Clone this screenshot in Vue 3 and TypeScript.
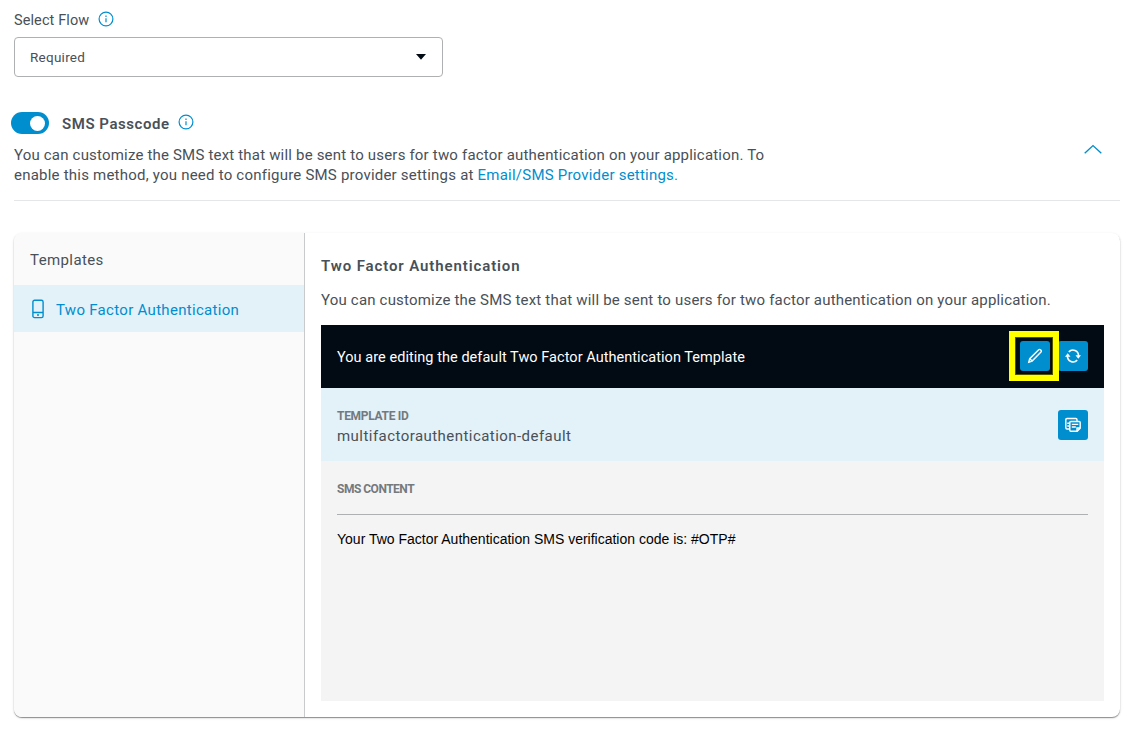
<script setup lang="ts">
import { ref } from 'vue'

interface Template {
  id: string
  name: string
  body: string
}

const flow = ref('Required')
const smsEnabled = ref(true)
const expanded = ref(true)
const template: Template = {
  id: 'multifactorauthentication-default',
  name: 'Two Factor Authentication',
  body: 'Your Two Factor Authentication SMS verification code is: #OTP#',
}
</script>

<template>
  <main class="page">
    <div class="label-row">
      <span class="select-label">Select Flow</span>
      <svg class="info" viewBox="0 0 16 16"><circle cx="8" cy="8" r="6.9" /><path d="M8 7.2v4M8 4.6v1.4" /></svg>
    </div>
    <div class="select">
      <span class="select-value">{{ flow }}</span>
      <svg class="caret" viewBox="0 0 10 6"><path d="M0 0h10L5 5.8z" /></svg>
    </div>

    <section class="method">
      <div class="method-text">
        <div class="method-head">
          <button class="toggle" :class="{ on: smsEnabled }" aria-label="SMS Passcode" @click="smsEnabled = !smsEnabled"><i></i></button>
          <h2 class="method-title">SMS Passcode</h2>
          <svg class="info" viewBox="0 0 16 16"><circle cx="8" cy="8" r="6.9" /><path d="M8 7.2v4M8 4.6v1.4" /></svg>
        </div>
        <p class="method-desc">
          <span class="line-a">You can customize the SMS text that will be sent to users for two factor authentication on your application. To</span><br />
          <span class="line-b">enable this method, you need to configure SMS provider settings at <a>Email/SMS Provider settings.</a></span>
        </p>
      </div>
      <button class="collapse" aria-label="Collapse" @click="expanded = !expanded">
        <svg viewBox="0 0 18 10"><path d="M.7 9.200 9 1.600l8.300 7.600" /></svg>
      </button>
    </section>

    <section class="card">
      <aside class="side">
        <div class="side-title"><span>Templates</span></div>
        <div class="side-item">
          <svg class="phone" viewBox="0 0 12 20"><rect x=".9" y="1.200" width="10.200" height="17.400" rx="1.700" /><path d="M1 13.500h10M5 16h2" /></svg>
          <span class="side-name">{{ template.name }}</span>
        </div>
      </aside>
      <div class="content">
        <h3 class="content-title">{{ template.name }}</h3>
        <p class="content-desc">You can customize the SMS text that will be sent to users for two factor authentication on your application.</p>
        <div class="editor">
          <div class="bar">
            <span class="bar-text">You are editing the default Two Factor Authentication Template</span>
            <div class="actions">
              <div class="highlight">
                <button class="action" aria-label="Edit">
                  <svg viewBox="0 0 16 16"><path d="M1.800 14.200l.9-3.500L11.700 1.700a1.200 1.200 0 0 1 1.700 0l.6.600a1.200 1.200 0 0 1 0 1.700L5.100 13.100zM2.900 10.800l2.200 2.200" /></svg>
                </button>
              </div>
              <button class="action" aria-label="Reset">
                <svg viewBox="0 0 16 16"><path class="arc" d="M3.800 3.900A5.600 5.600 0 0 1 13.500 8M12.200 12.100A5.600 5.600 0 0 1 2.500 8" /><path class="solid" d="M10.500 7.200H16l-2.700 3.600zM0 8.800h5.500L2.700 5.200z" /></svg>
              </button>
            </div>
          </div>
          <div class="identity">
            <div class="identity-text">
              <div class="caption id-caption">TEMPLATE ID</div>
              <div class="identity-value">{{ template.id }}</div>
            </div>
            <button class="action" aria-label="Copy">
              <svg viewBox="0 0 16 16"><path d="M4.200 12H2a1.200 1.200 0 0 1-1.200-1.200V2.700A1.200 1.200 0 0 1 2 1.500h8.800A1.200 1.200 0 0 1 12 2.700v1M2.300 6.200h2M2.300 9h2M5.800 4.500h8.400a1 1 0 0 1 1 1v5.700l-3 3H5.800a1 1 0 0 1-1-1V5.500a1 1 0 0 1 1-1zM15 11h-3v3M6.800 7.400h6.500M6.800 10h4" /></svg>
            </button>
          </div>
          <div class="message">
            <div class="caption sms-caption">SMS CONTENT</div>
            <p class="message-body">{{ template.body }}</p>
          </div>
        </div>
      </div>
    </section>
  </main>
</template>

<style>
body {
  margin: 0;
  background: #fff;
}
</style>

<style scoped>
.page {
  box-sizing: border-box;
  height: 731px;
  padding: 9px 15px 14px 14px;
  overflow: hidden;
  color: #495057;
  font-family: Roboto, sans-serif;
  font-size: 15px;
}
button {
  padding: 0;
  border: 0;
}
svg {
  display: block;
  fill: none;
}
h2, h3, p {
  margin: 0;
}
span, h2, h3, p, div {
  white-space: nowrap;
}
.info {
  width: 16px;
  height: 16px;
  stroke: #008ecf;
  stroke-width: 1.2;
}
.label-row {
  display: flex;
  align-items: center;
  gap: 8.5px;
  height: 20px;
}
.select-label {
  width: 75px;
  padding-top: 2px;
  font-size: 14.5px;
  letter-spacing: 0.1px;
}
.select {
  display: flex;
  box-sizing: border-box;
  width: 429px;
  height: 40px;
  margin-top: 8px;
  padding: 0 16px 0 15px;
  align-items: center;
  justify-content: space-between;
  border: 1px solid #aeb0b2;
  border-radius: 4px;
}
.select-value {
  font-size: 13.5px;
  letter-spacing: 0.25px;
}
.caret {
  width: 10px;
  height: 6px;
  fill: #020a13;
}
.method {
  display: flex;
  box-sizing: border-box;
  height: 124px;
  padding-top: 34px;
  align-items: flex-start;
  justify-content: space-between;
  border-bottom: 1px solid #e5e6e7;
}
.method-head {
  display: flex;
  height: 24px;
  margin-left: -3px;
  align-items: center;
}
.toggle {
  display: flex;
  box-sizing: border-box;
  width: 38px;
  height: 22px;
  padding: 0 4px;
  align-items: center;
  border-radius: 11px;
  background: #aeb0b2;
}
.toggle.on {
  justify-content: flex-end;
  background: #008ecf;
}
.toggle i {
  width: 15px;
  height: 15px;
  border-radius: 50%;
  background: #fff;
}
.method-title {
  width: 107px;
  margin: 0 9px 0 13px;
  padding-top: 1px;
  font-size: 15px;
  font-weight: 600;
  letter-spacing: 0.55px;
}
.method-head .info {
  margin-top: -2px;
}
.method-desc {
  margin-top: 10px;
  line-height: 20px;
}
.line-a {
  letter-spacing: 0.187px;
}
.line-b {
  letter-spacing: 0.22px;
}
a {
  color: #008ecf;
}
.collapse {
  margin: 33px 18px 0 0;
  background: none;
}
.collapse svg {
  width: 18px;
  height: 10px;
  stroke: #008ecf;
  stroke-width: 1.4;
}
.card {
  display: flex;
  height: 484px;
  margin-top: 32px;
  overflow: hidden;
  border-radius: 8px;
  box-shadow: 0 1px 1px rgba(0, 0, 0, 0.4), 0 1px 3px rgba(0, 0, 0, 0.12);
}
.side {
  box-sizing: border-box;
  width: 291px;
  flex: none;
  border-right: 1px solid #c9cacb;
  background: #fafafa;
}
.side-title {
  display: flex;
  box-sizing: border-box;
  height: 52px;
  padding: 2px 0 0 16px;
  align-items: center;
  letter-spacing: 0.4px;
}
.side-item {
  display: flex;
  height: 47px;
  padding-left: 18px;
  align-items: center;
  gap: 12px;
  color: #008ecf;
  background: #e3f1f9;
}
.side-name {
  padding-top: 2px;
  letter-spacing: 0.3px;
}
.phone {
  width: 12px;
  height: 20px;
  stroke: #008ecf;
  stroke-width: 1.4;
}
.content {
  flex: 1;
  padding: 22px 16px 16px;
}
.content-title {
  height: 22px;
  font-size: 15px;
  font-weight: 600;
  line-height: 22px;
  letter-spacing: 0.89px;
}
.content-desc {
  margin-top: 12px;
  line-height: 22px;
  letter-spacing: 0.19px;
}
.editor {
  height: 376px;
  margin-top: 14px;
  background: #f4f4f4;
}
.bar {
  display: flex;
  height: 63px;
  padding: 0 16px;
  align-items: center;
  justify-content: space-between;
  color: #fff;
  background: #020a13;
}
.bar-text {
  padding-top: 1px;
  font-size: 14.5px;
  letter-spacing: 0.045px;
}
.actions {
  display: flex;
  align-items: center;
  margin-top: -1px;
}
.highlight {
  display: flex;
  box-sizing: border-box;
  width: 50px;
  height: 50px;
  padding: 4px 3px 0 5px;
  align-items: flex-start;
  border: 6px solid #ff0;
  box-shadow: inset 0 0 0 1px #515200;
  z-index: 1;
}
.highlight + .action {
  margin-left: -1px;
}
.action {
  display: flex;
  width: 30px;
  height: 30px;
  align-items: center;
  justify-content: center;
  border-radius: 3px;
  background: #008ecf;
}
.action svg {
  width: 16px;
  height: 16px;
  stroke: #fff;
  stroke-width: 1.4;
}
.action .arc {
  stroke-width: 1.6;
}
.action .solid {
  fill: #fff;
  stroke: none;
}
.identity {
  display: flex;
  height: 73px;
  padding: 0 16px;
  align-items: center;
  justify-content: space-between;
  background: #e3f1f9;
}
.identity-text {
  padding-top: 5px;
}
.caption {
  color: #74797d;
  font-size: 12px;
  font-weight: 700;
  line-height: 18px;
  letter-spacing: -0.3px;
}
.identity-value {
  line-height: 22px;
  letter-spacing: 0.45px;
}
.message {
  padding: 19px 16px 0;
}
.sms-caption {
  height: 34px;
  border-bottom: 1px solid #aeb0b2;
  letter-spacing: -0.5px;
}
.message-body {
  margin-top: 14px;
  color: #000;
  font-family: "Liberation Sans", Arial, sans-serif;
  font-size: 14px;
  line-height: 20px;
}
</style>
